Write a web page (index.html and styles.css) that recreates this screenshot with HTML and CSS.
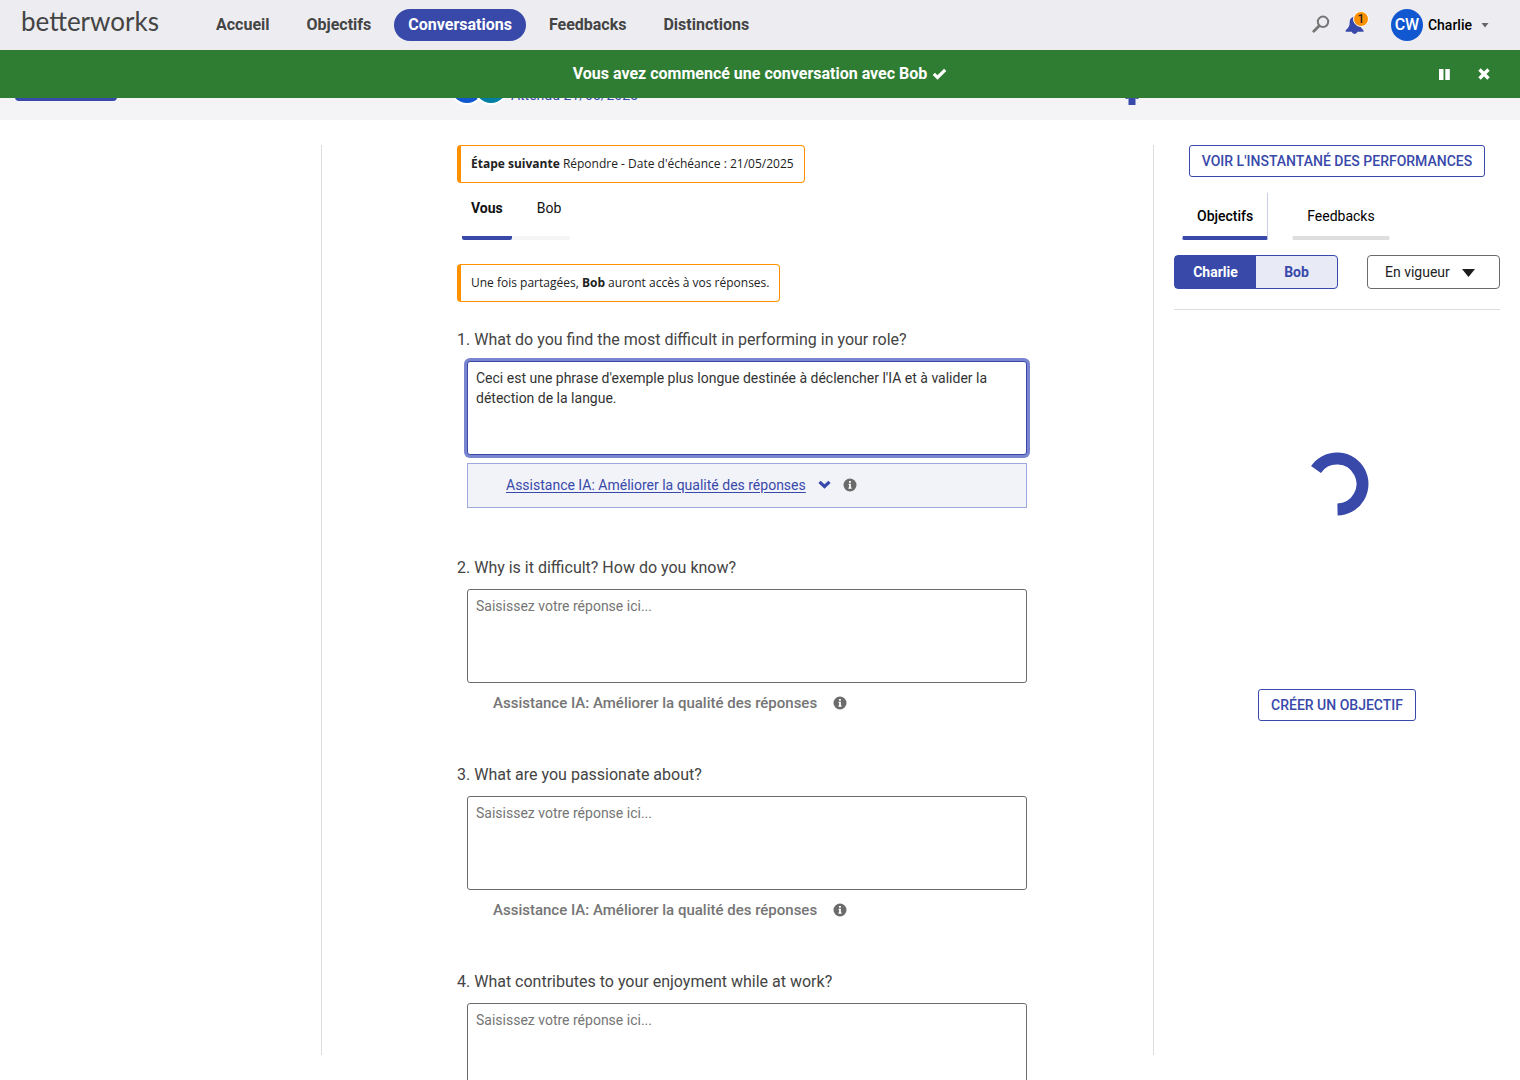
FILE: index.html
```html
<!DOCTYPE html>
<html lang="fr">
<head>
<meta charset="utf-8">
<meta name="viewport" content="width=device-width, initial-scale=1">
<title>Conversations</title>
<link rel="stylesheet" href="styles.css">
</head>
<body>
<svg class="sprite" aria-hidden="true">
  <symbol id="info" viewBox="0 0 14 14">
    <circle cx="7" cy="7" r="6.5" fill="#6b6b6b"/>
    <path d="M5.6 5.8h2.3v3.8h.7v1.1H5.4V9.6h.7V6.9h-.5zM6 2.9h1.9v1.8H6z" fill="#fff"/>
  </symbol>
</svg>
<div class="app">
  <header class="topbar">
    <a class="logo" href="#">betterworks</a>
    <nav class="nav">
      <a href="#">Accueil</a>
      <a href="#">Objectifs</a>
      <a href="#" class="active" aria-current="page">Conversations</a>
      <a href="#">Feedbacks</a>
      <a href="#">Distinctions</a>
    </nav>
    <div class="tools">
      <button class="icon-btn search" aria-label="Rechercher">
        <svg width="18" height="18" viewBox="0 0 18 18" fill="none" stroke="#757575"><circle cx="11" cy="6.8" r="5.2" stroke-width="2"/><path d="M7 11L1.8 16.2" stroke-width="2.8" stroke-linecap="round"/></svg>
      </button>
      <button class="icon-btn bell" aria-label="Notifications">
        <svg width="20" height="20" viewBox="0 0 20 20" fill="#3849aa"><path d="M9.5 1.5c-3.3.4-4.8 2.8-4.8 5.6 0 4-1.2 6-4 8.1v1.6h17.8v-1.6c-2.7-2-3.9-4.1-3.9-8.1 0-2.8-1.7-5.2-5.1-5.6zM6.700 16.800a3 2.800 0 0 0 5.800 0z"/></svg>
        <span class="badge">1</span>
      </button>
      <button class="user">
        <span class="avatar">CW</span>
        <span>Charlie</span>
        <svg width="8" height="5" viewBox="0 0 8 5"><path d="M0.500 0h7L4 4.500z" fill="#666"/></svg>
      </button>
    </div>
  </header>

  <div class="subbar-wrap">
    <div class="subbar">
      <button class="primary" aria-label="Retour"></button>
      <div class="participants">
        <span class="dot blue"></span><span class="dot teal"></span>
        <span class="due">Attendu 21/05/2025</span>
      </div>
      <svg class="pin" width="14" height="26" viewBox="0 0 14 26" fill="#3849aa"><path d="M3.500 26V19.500H2.500V20H0l3-3V6h8v11l3 3h-2.500v-.5h-1V26z"/></svg>
    </div>
    <div class="banner" role="status">
      <p>Vous avez commencé une conversation avec Bob
        <svg width="15" height="12" viewBox="0 0 15 12"><path d="M1.800 5.800l3.700 3.700L13.200 1.800" fill="none" stroke="#fff" stroke-width="3.200"/></svg></p>
      <div class="banner-actions">
        <button aria-label="Pause"><svg width="11" height="11" viewBox="0 0 11 11" fill="#fff"><path d="M0 0h4.500v11H0zM6.300 0h4.500v11H6.300z"/></svg></button>
        <button aria-label="Fermer"><svg width="12" height="12" viewBox="0 0 12 12"><path d="M1.500 1.500l9 9M10.500 1.500l-9 9" stroke="#fff" stroke-width="3.400"/></svg></button>
      </div>
    </div>
  </div>

  <div class="columns">
    <aside class="left"></aside>
    <main class="main">
      <div class="form">
        <p class="notice"><b>Étape suivante</b> Répondre - Date d'échéance : 21/05/2025</p>
        <div class="people-tabs" role="tablist">
          <button role="tab" aria-selected="true">Vous</button>
          <button role="tab" aria-selected="false">Bob</button>
        </div>
        <p class="notice">Une fois partagées, <b>Bob</b> auront accès à vos réponses.</p>

        <section class="question">
          <label for="q1">1. What do you find the most difficult in performing in your role?</label>
          <textarea id="q1" class="focused">Ceci est une phrase d'exemple plus longue destinée à déclencher l'IA et à valider la détection de la langue.</textarea>
          <div class="assist-box">
            <a href="#">Assistance IA: Améliorer la qualité des réponses</a>
            <svg class="chevron" width="13" height="9" viewBox="0 0 13 9"><path d="M1.500 1.800l5 4.700 5-4.700" fill="none" stroke="#3849aa" stroke-width="3.200"/></svg>
            <svg width="14" height="14"><use href="#info"/></svg>
          </div>
        </section>
        <section class="question">
          <label for="q2">2. Why is it difficult? How do you know?</label>
          <textarea id="q2" placeholder="Saisissez votre réponse ici..."></textarea>
          <div class="assist">Assistance IA: Améliorer la qualité des réponses <svg width="14" height="14"><use href="#info"/></svg></div>
        </section>
        <section class="question">
          <label for="q3">3. What are you passionate about?</label>
          <textarea id="q3" placeholder="Saisissez votre réponse ici..."></textarea>
          <div class="assist">Assistance IA: Améliorer la qualité des réponses <svg width="14" height="14"><use href="#info"/></svg></div>
        </section>
        <section class="question">
          <label for="q4">4. What contributes to your enjoyment while at work?</label>
          <textarea id="q4" placeholder="Saisissez votre réponse ici..."></textarea>
        </section>
      </div>
    </main>
    <aside class="right">
      <button class="outline">VOIR L'INSTANTANÉ DES PERFORMANCES</button>
      <div class="side-tabs" role="tablist">
        <button role="tab" aria-selected="true">Objectifs</button>
        <button role="tab" aria-selected="false">Feedbacks</button>
      </div>
      <div class="filters">
        <div class="segmented">
          <button class="on">Charlie</button>
          <button>Bob</button>
        </div>
        <div class="select">
          <select aria-label="Période"><option>En vigueur</option></select>
          <svg width="13" height="8" viewBox="0 0 13 8"><path d="M0 0h13L6.500 8z" fill="#1d1d1f"/></svg>
        </div>
      </div>
      <div class="loader">
        <svg width="64" height="64" viewBox="0 0 64 64"><path d="M11 17.500A25.500 25.500 0 1 1 32.500 57.500" fill="none" stroke="#3849aa" stroke-width="12"/></svg>
      </div>
      <button class="outline">CRÉER UN OBJECTIF</button>
    </aside>
  </div>
</div>
</body>
</html>
```
FILE: styles.css
```css
* { box-sizing: border-box; }

body {
  margin: 0;
  font-family: Roboto, "Liberation Sans", sans-serif;
  font-size: 14px;
  line-height: 20px;
  color: #222;
  background: #fff;
}

button, select, textarea { font: inherit; color: inherit; }
button { border: 0; padding: 0; background: none; cursor: pointer; }
svg { display: block; flex: none; }
p { margin: 0; }
.sprite { position: absolute; width: 0; height: 0; }

.app {
  display: flex;
  flex-direction: column;
  height: 100vh;
  overflow: hidden;
}

/* Top bar */
.topbar {
  display: flex;
  align-items: center;
  flex: none;
  height: 50px;
  padding: 0 31px 0 21px;
  background: #edecf1;
}
.logo {
  width: 181px;
  padding-bottom: 8px;
  font-family: Lato, sans-serif;
  font-weight: 400;
  font-size: 26px;
  color: #444;
  text-decoration: none;
}
.nav { display: flex; gap: 9px; }
.nav a {
  padding: 6px 14px;
  border-radius: 16px;
  font-size: 16px;
  font-weight: 700;
  color: #444;
  text-decoration: none;
}
.nav .active { background: #3849aa; color: #fff; }
.tools { display: flex; align-items: center; margin-left: auto; }
.icon-btn { position: relative; }
.search { margin-right: 15px; padding-bottom: 2px; }
.bell { margin-right: 26px; }
.badge {
  position: absolute;
  top: -4px;
  left: 8px;
  width: 16px;
  height: 16px;
  border: 1px solid #fff;
  border-radius: 50%;
  background: #ff9100;
  color: #222;
  font-size: 12px;
  font-weight: 500;
  line-height: 14px;
  text-align: center;
}
.user {
  display: flex;
  align-items: center;
  gap: 5px;
  font-weight: 500;
  color: #000;
}
.user svg { margin-left: 4px; }
.avatar {
  width: 32px;
  border-radius: 50%;
  background: #1158d0;
  color: #fff;
  font-size: 16px;
  line-height: 32px;
}

/* Conversation bar, partly covered by the message banner */
.subbar-wrap { position: relative; flex: none; }
.subbar {
  display: flex;
  align-items: center;
  height: 70px;
  padding: 0 381px 0 15px;
  background: #f4f4f7;
}
.primary { width: 102px; height: 32px; border-radius: 4px; background: #3849aa; }
.participants { display: flex; align-items: center; margin: 0 auto 0 332px; }
.dot {
  width: 36px;
  height: 36px;
  margin-top: 4px;
  border: 2px solid #fff;
  border-radius: 50%;
}
.blue { background: #1158d0; }
.teal { margin-left: -12px; background: #007ea3; }
.due { margin-left: 2px; padding-top: 20px; color: #3849aa; }
.pin { margin-top: 14px; }
.banner {
  position: absolute;
  top: 0;
  left: 0;
  right: 0;
  display: flex;
  align-items: center;
  justify-content: center;
  height: 48px;
  background: #2f7d32;
  color: #fff;
  font-size: 16px;
  font-weight: 700;
}
.banner p { display: flex; align-items: center; gap: 5px; }
.banner-actions {
  position: absolute;
  right: 30px;
  display: flex;
  align-items: center;
  gap: 28px;
}

/* Three columns */
.columns {
  display: grid;
  grid-template-columns: 322px 1fr 367px;
  grid-template-rows: 100%;
  flex: 1;
  min-height: 0;
  margin: 25px 0;
}
.left { border-right: 1px solid #dcdcdc; }
.right {
  display: flex;
  flex-direction: column;
  align-items: center;
  padding: 0 20px;
  border-left: 1px solid #dcdcdc;
}

.form { max-width: 581px; margin: 0 auto; padding: 0 1px 0 10px; }
.notice {
  width: fit-content;
  padding: 8px 10px;
  border: 1px solid #ff9100;
  border-left-width: 4px;
  border-radius: 4px;
  font-family: "Open Sans", Roboto, sans-serif;
  font-size: 12px;
}
.people-tabs {
  display: flex;
  margin: 0 0 24px 5px;
}
.people-tabs button {
  height: 57px;
  padding: 0 9px 4px;
  border-bottom: 4px solid #f5f5f5;
  border-radius: 2px;
  color: #111;
}
.people-tabs button + button { padding-left: 25px; }
.people-tabs [aria-selected="true"] { border-color: #3849aa; font-weight: 700; }
.notice + .question { margin-top: 28px; }

.question { margin-bottom: 50px; }
.question label {
  display: block;
  margin-bottom: 11px;
  font-size: 16px;
  color: #444;
}
.question textarea {
  display: block;
  width: calc(100% - 10px);
  height: 94px;
  margin-left: 10px;
  padding: 6px 8px;
  border: 1px solid #6b6b6b;
  border-radius: 3px;
  outline: 0;
  resize: none;
  color: #333;
}
.question textarea::placeholder { color: #757575; }
.question .focused {
  border-color: #3849aa;
  box-shadow: 0 0 0 3px #7986cf;
}
.assist-box {
  display: flex;
  align-items: center;
  height: 45px;
  margin: 8px 0 0 10px;
  padding: 0 0 2px 38px;
  border: 1px solid #9fa8da;
  background: #f2f3f9;
}
.assist-box a { color: #3849aa; text-underline-offset: 2px; }
.chevron { margin: 0 12px; }
.assist {
  display: flex;
  align-items: center;
  gap: 16px;
  height: 24px;
  margin: 8px 0 0 36px;
  font-size: 15px;
  font-weight: 500;
  color: #757575;
}

/* Right column */
.outline {
  flex: none;
  height: 32px;
  padding: 0 12px;
  border: 1px solid #3849aa;
  border-radius: 3px;
  font-weight: 500;
  color: #3849aa;
}
.side-tabs {
  display: flex;
  align-self: stretch;
  gap: 24px;
  margin: 15px 8px;
}
.side-tabs button {
  height: 48px;
  padding: 2px 14px 0;
  border: 1px solid transparent;
  border-bottom: 4px solid #dedede;
  border-radius: 2px;
  color: #000;
}
.side-tabs [aria-selected="true"] {
  border-right-color: #c9cdea;
  border-bottom-color: #3849aa;
  font-weight: 500;
}
.filters {
  display: flex;
  align-self: stretch;
  justify-content: space-between;
  padding-bottom: 20px;
  border-bottom: 1px solid #dcdcdc;
}
.segmented {
  display: grid;
  grid-template-columns: 1fr 1fr;
  width: 164px;
  height: 34px;
  border: 1px solid #3849aa;
  border-radius: 4px;
  background: #e8eaf6;
  color: #3849aa;
}
.segmented button { font-weight: 700; }
.segmented .on { background: #3849aa; color: #fff; }
.select { position: relative; width: 133px; }
.select select {
  width: 100%;
  height: 34px;
  padding: 0 17px;
  border: 1px solid #6b6b6b;
  border-radius: 4px;
  appearance: none;
  background: #fff;
}
.select svg {
  position: absolute;
  top: 14px;
  right: 25px;
  pointer-events: none;
}
.loader { padding: 142px 0 173px; }
```
